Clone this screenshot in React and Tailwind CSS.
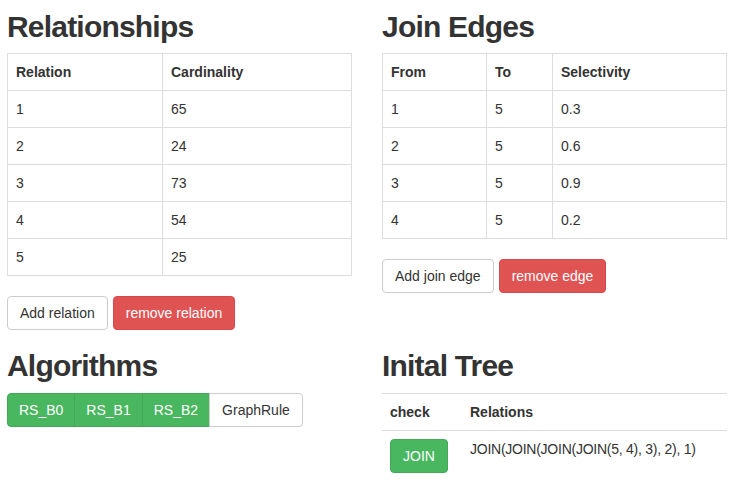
import React from "react";

const relations = [
  [1, 65],
  [2, 24],
  [3, 73],
  [4, 54],
  [5, 25],
];

const edges = [
  [1, 5, "0.3"],
  [2, 5, "0.6"],
  [3, 5, "0.9"],
  [4, 5, "0.2"],
];

const algorithms = ["RS_B0", "RS_B1", "RS_B2"];

// Bootstrap-ish pieces
const cell = "border border-[#ddd] px-2 py-2 leading-5 text-left align-top";
const btn =
  "inline-block h-[34px] px-3 py-[6px] text-[14px] leading-5 rounded border";
const btnDefault = `${btn} bg-white border-[#ccc] text-[#333]`;
const btnDanger = `${btn} bg-[#e05353] border-[#d9484d] text-white`;

const Heading = ({ children, className = "" }) => (
  <h2
    className={`text-[30px] leading-[33px] font-bold tracking-[-0.8px] text-[#333] ${className}`}
  >
    {children}
  </h2>
);

const App = () => {
  return (
    <div
      className="min-h-screen bg-white text-[14px] text-[#333]"
      style={{ fontFamily: '"Liberation Sans", Arial, sans-serif' }}
    >
      <div className="grid grid-cols-[345px_345px] gap-x-[30px] pl-[7px]">
        {/* Relationships */}
        <div>
          <Heading className="mt-[10px] mb-[10px]">Relationships</Heading>
          <table className="w-full border-collapse">
            <thead>
              <tr>
                <th className={`${cell} w-[155px] font-bold`}>Relation</th>
                <th className={`${cell} font-bold`}>Cardinality</th>
              </tr>
            </thead>
            <tbody>
              {relations.map((row) => (
                <tr key={row[0]}>
                  <td className={cell}>{row[0]}</td>
                  <td className={cell}>{row[1]}</td>
                </tr>
              ))}
            </tbody>
          </table>
          <div className="mt-5 flex gap-[5px]">
            <button className={btnDefault}>Add relation</button>
            <button className={btnDanger}>remove relation</button>
          </div>
        </div>

        {/* Join edges */}
        <div>
          <Heading className="mt-[10px] mb-[10px]">Join Edges</Heading>
          <table className="w-full border-collapse">
            <thead>
              <tr>
                <th className={`${cell} w-[104px] font-bold`}>From</th>
                <th className={`${cell} w-[66px] font-bold`}>To</th>
                <th className={`${cell} font-bold`}>Selectivity</th>
              </tr>
            </thead>
            <tbody>
              {edges.map((row) => (
                <tr key={row[0]}>
                  <td className={cell}>{row[0]}</td>
                  <td className={cell}>{row[1]}</td>
                  <td className={cell}>{row[2]}</td>
                </tr>
              ))}
            </tbody>
          </table>
          <div className="mt-5 flex gap-[5px]">
            <button className={btnDefault}>Add join edge</button>
            <button className={btnDanger}>remove edge</button>
          </div>
        </div>

        {/* Algorithms */}
        <div>
          <Heading className="mt-[19px] mb-[11px]">Algorithms</Heading>
          <div className="flex">
            {algorithms.map((name, i) => (
              <button
                key={name}
                className={`h-[34px] px-[11px] py-[6px] leading-5 border border-[#43a958] bg-[#49b75f] text-white ${
                  i === 0 ? "rounded-l" : "-ml-px"
                }`}
              >
                {name}
              </button>
            ))}
            <button className="-ml-px h-[34px] px-3 py-[6px] leading-5 border border-[#ccc] bg-white text-[#333] rounded-r">
              GraphRule
            </button>
          </div>
        </div>

        {/* Initial tree */}
        <div>
          <Heading className="mt-[19px] mb-[11px]">Inital Tree</Heading>
          <table className="w-full border-collapse">
            <thead>
              <tr className="border-t border-[#ddd]">
                <th className="w-[80px] px-2 py-2 leading-5 text-left font-bold border-b border-[#ddd]">
                  check
                </th>
                <th className="px-2 py-2 leading-5 text-left font-bold border-b border-[#ddd]">
                  Relations
                </th>
              </tr>
            </thead>
            <tbody>
              <tr>
                <td className="px-2 py-2 align-top">
                  <button className="h-[34px] px-3 py-[6px] leading-5 rounded border border-[#43a958] bg-[#49b75f] text-white">
                    JOIN
                  </button>
                </td>
                <td className="px-2 py-2 leading-5 align-top tracking-[-0.25px]">
                  JOIN(JOIN(JOIN(JOIN(5, 4), 3), 2), 1)
                </td>
              </tr>
            </tbody>
          </table>
        </div>
      </div>
    </div>
  );
};

export default App;
